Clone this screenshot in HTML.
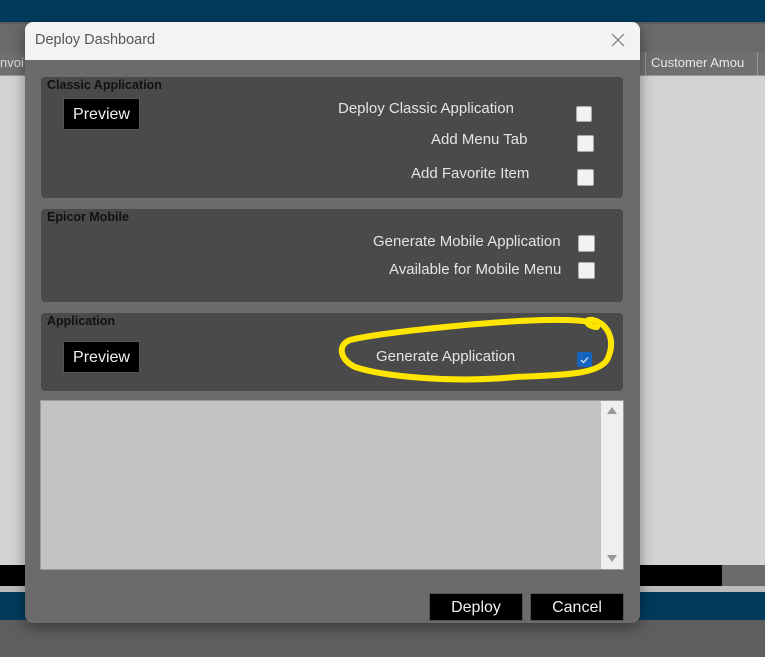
<!DOCTYPE html>
<html><head><style>
body{margin:0;width:765px;height:657px;position:relative;overflow:hidden;background:#5e5e5e;font-family:"Liberation Sans",sans-serif;}
.a{position:absolute}
.lbl{position:absolute;font-size:12.5px;font-weight:bold;color:#111}
.t{position:absolute;font-size:15px;color:#e4e4e4;white-space:nowrap}
.cb{position:absolute;width:14px;height:14px;background:#f2f2f2;border:1px solid #aaa;border-radius:2px}
.btn{position:absolute;background:#000;color:#f0f0f0;font-size:16px;text-align:center;border:1px solid #555;box-sizing:border-box}
.pnl{position:absolute;left:41px;width:582px;background:#4a4a4a;border-radius:4px}
</style></head><body>
<div class="a" style="left:0;top:0;width:765px;height:22px;background:#003a5c"></div>
<div class="a" style="left:0;top:24px;width:765px;height:28px;background:#6a6a6a"></div>
<div class="a" style="left:0;top:52px;width:765px;height:23px;background:#707070;border-bottom:1px solid #999"></div>
<div class="a" style="left:0;top:55px;font-size:13px;color:#ddd">nvoi</div>
<div class="a" style="left:645px;top:52px;width:1px;height:23px;background:#999"></div>
<div class="a" style="left:651px;top:55px;font-size:13px;color:#e8e8e8">Customer Amou</div>
<div class="a" style="left:757px;top:52px;width:1px;height:23px;background:#999"></div>
<div class="a" style="left:0;top:76px;width:765px;height:489px;background:#d3d3d3"></div>
<div class="a" style="left:0;top:565px;width:722px;height:21px;background:#000"></div>
<div class="a" style="left:722px;top:565px;width:43px;height:21px;background:#6a6a6a"></div>
<div class="a" style="left:0;top:586px;width:765px;height:6px;background:#bbb"></div>
<div class="a" style="left:0;top:592px;width:765px;height:28px;background:#003a5c"></div>

<div class="a" style="left:25px;top:22px;width:615px;height:601px;background:#6b6b6b;border-radius:8px;overflow:hidden;box-shadow:0 4px 14px rgba(0,0,0,.4)">
 <div class="a" style="left:0;top:0;width:615px;height:38px;background:#f3f3f3"></div>
 <div class="a" style="left:10px;top:10px;font-size:14.5px;color:#555">Deploy Dashboard</div>
 <svg class="a" style="left:586px;top:11px" width="14" height="14"><path d="M1 1L13 13M13 1L1 13" stroke="#777" stroke-width="1.2"/></svg>
</div>

<div class="pnl" style="top:77px;height:121px"></div>
<div class="lbl" style="left:47px;top:78px">Classic Application</div>
<div class="btn" style="left:63px;top:98px;width:77px;height:32px;line-height:31px">Preview</div>
<div class="t" style="left:338px;top:100px">Deploy Classic Application</div>
<div class="cb" style="left:576px;top:106px"></div>
<div class="t" style="left:431px;top:131px">Add Menu Tab</div>
<div class="cb" style="left:577px;top:135px;width:15px;height:15px"></div>
<div class="t" style="left:411px;top:165px">Add Favorite Item</div>
<div class="cb" style="left:577px;top:169px;width:15px;height:15px"></div>

<div class="pnl" style="top:209px;height:93px"></div>
<div class="lbl" style="left:47px;top:210px">Epicor Mobile</div>
<div class="t" style="left:373px;top:233px">Generate Mobile Application</div>
<div class="cb" style="left:578px;top:235px;width:15px;height:15px"></div>
<div class="t" style="left:389px;top:261px">Available for Mobile Menu</div>
<div class="cb" style="left:578px;top:262px;width:15px;height:15px"></div>

<div class="pnl" style="top:313px;height:78px"></div>
<div class="lbl" style="left:47px;top:314px">Application</div>
<div class="btn" style="left:63px;top:341px;width:77px;height:32px;line-height:31px">Preview</div>
<div class="t" style="left:376px;top:348px">Generate Application</div>
<div class="a" style="left:577px;top:352px;width:15px;height:15px;background:#1565c0;border-radius:2px"></div>
<svg class="a" style="left:577px;top:352px" width="15" height="15"><path d="M4 8l2.5 2.5L11 5.5" stroke="#cfe0f5" stroke-width="1.3" fill="none"/></svg>
<svg class="a" style="left:335px;top:305px" width="285" height="80"><path d="M255 17C225 12 160 17 110 22C70 26 35 30 15 35C2 40 5 55 20 62C50 72 120 78 180 72C225 70 262 70 272 55C282 35 272 18 258 15C248 13 252 22 262 22" stroke="#ffe600" stroke-width="6" fill="none" stroke-linecap="round"/></svg>

<div class="a" style="left:40px;top:400px;width:582px;height:168px;background:#c2c2c2;border:1px solid #999"></div>
<div class="a" style="left:601px;top:401px;width:22px;height:168px;background:#efefef"></div>
<svg class="a" style="left:606px;top:406px" width="12" height="10"><path d="M6 1L11 8H1Z" fill="#999"/></svg>
<svg class="a" style="left:606px;top:554px" width="12" height="10"><path d="M1 1H11L6 8Z" fill="#999"/></svg>

<div class="btn" style="left:429px;top:593px;width:94px;height:28px;line-height:27px">Deploy</div>
<div class="btn" style="left:530px;top:593px;width:94px;height:28px;line-height:27px">Cancel</div>
</body></html>
